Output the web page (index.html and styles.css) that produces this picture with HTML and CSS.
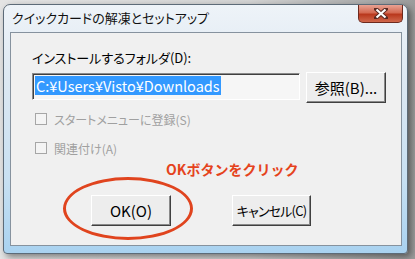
FILE: index.html
```html
<!DOCTYPE html>
<html lang="ja">
<head>
    <meta charset="UTF-8">
    <title>クイックカードの解凍とセットアップ</title>
    <link rel="stylesheet" href="styles.css">
</head>
<body>
    <div class="window">
        <div class="titlebar">
            <span class="title">クイックカードの解凍とセットアップ</span>
            <div class="close">
                <svg width="14" height="11" viewBox="0 0 14 11">
                    <path d="M2 1 L12 10 M12 1 L2 10" stroke="#5a2a22" stroke-width="4" stroke-linecap="square"/>
                    <path d="M2.5 1.5 L11.5 9.5 M11.5 1.5 L2.5 9.5" stroke="#fff" stroke-width="2.2"/>
                </svg>
            </div>
        </div>
        <div class="client">
            <div class="label">インストールするフォルダ(D):</div>
            <div class="path-row">
                <div class="path-input"><span class="selected">C:¥Users¥Visto¥Downloads</span></div>
                <div class="btn btn-browse">参照(B)...</div>
            </div>
            <div class="check first"><span class="box"></span>スタートメニューに登録(S)</div>
            <div class="check"><span class="box"></span>関連付け(A)</div>
            <div class="hint">OKボタンをクリック</div>
            <div class="actions">
                <div class="btn btn-ok">OK(O)</div>
                <div class="btn btn-cancel">キャンセル(C)</div>
                <div class="ring"></div>
            </div>
        </div>
    </div>
</body>
</html>
```

FILE: styles.css
```css
body {
    margin: 0;
    width: 415px;
    height: 259px;
    overflow: hidden;
    background: linear-gradient(90deg, #e4e4e4 0%, #d4d4d4 60%, #9c9c9c 100%);
    font-family: "Noto Sans CJK JP", sans-serif;
}
.window {
    margin: 4px 0 0 3px;
    width: 403px;
    height: 248px;
    border: 1px solid #5d6b78;
    border-radius: 7px 7px 4px 4px;
    background: linear-gradient(#eef3f8 0%, #dde8f2 30%, #c8e0f2 70%, #a9d2f0 100%);
    box-shadow: 3px 3px 7px rgba(0, 0, 0, 0.45);
    display: flex;
    flex-direction: column;
}
.titlebar {
    height: 27px;
    display: flex;
    justify-content: space-between;
    align-items: flex-start;
}
.title {
    margin: 3px 0 0 8px;
    font-size: 13px;
    font-feature-settings: "palt";
    color: #111;
}
.close {
    width: 43px;
    height: 17px;
    margin-right: 4px;
    border: 1px solid #6d2a1e;
    border-top: none;
    border-radius: 0 0 5px 5px;
    background: linear-gradient(#e8a293 0%, #d46a52 45%, #b9381d 55%, #d0684c 100%);
    display: flex;
    align-items: center;
    justify-content: center;
}
.client {
    margin: 0 5px 7px 6px;
    flex: 1;
    border: 1px solid #86929e;
    background: #f0f0f0;
    padding: 15px 0 0 21px;
    font-size: 13px;
    font-feature-settings: "palt";
    color: #000;
}
.label {
    height: 20px;
    line-height: 20px;
}
.path-row {
    display: flex;
    align-items: flex-start;
    margin-top: 5px;
}
.path-input {
    width: 264px;
    height: 23px;
    border: 1px solid;
    border-color: #8a8a8a #ffffff #ffffff #8a8a8a;
    box-shadow: inset 1px 1px #404040;
    background: #f6f6f6;
    padding: 2px 0 0 2px;
}
.selected {
    display: inline-block;
    background: #3399ff;
    color: #fff;
    font-size: 14.5px;
    line-height: 19px;
    padding: 0 1px;
    font-feature-settings: normal;
}
.btn {
    box-sizing: border-box;
    height: 31px;
    border: 1px solid;
    border-color: #ffffff #404040 #404040 #ffffff;
    box-shadow: inset -1px -1px #8a8a8a;
    background: #ededed;
    display: flex;
    align-items: center;
    justify-content: center;
    font-size: 15px;
    white-space: nowrap;
}
.btn-browse {
    width: 80px;
    margin: -1px 0 0 6px;
}
.check {
    display: flex;
    align-items: center;
    height: 24px;
    margin: 5px 0 0 3px;
    font-size: 12px;
    color: #a0a0a0;
}
.check.first {
    margin-top: 4px;
}
.box {
    width: 10px;
    height: 10px;
    border: 1px solid #a6a6a6;
    background: #f4f4f4;
    margin-right: 7px;
}
.hint {
    margin-left: 134px;
    font-size: 14px;
    font-weight: bold;
    font-feature-settings: normal;
    color: #e5431c;
    height: 18px;
    line-height: 18px;
}
.actions {
    position: relative;
    display: flex;
    margin-top: 17px;
    padding-left: 59px;
    gap: 61px;
}
.btn-ok {
    width: 80px;
}
.btn-cancel {
    width: 79px;
    font-size: 13px;
    letter-spacing: -0.8px;
}
.ring {
    position: absolute;
    left: 31px;
    top: -18px;
    width: 124px;
    height: 57px;
    border: 3px solid #e0441e;
    border-radius: 50%;
}
```
